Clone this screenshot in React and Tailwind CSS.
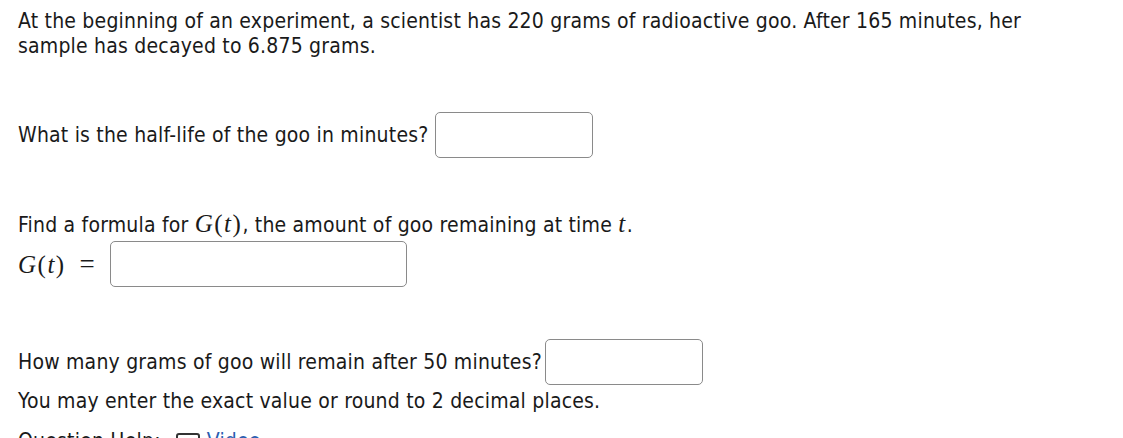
import React from 'react';

const AnswerBox = ({ className = '' }) => (
  <span className={`inline-block h-[46px] rounded-[5px] border border-[#8a8a8a] bg-white align-middle ${className}`} />
);

const M = ({ children }) => (
  <span className="font-['Liberation_Serif',serif] text-[25px] tracking-[1.5px]">{children}</span>
);

const App = () => {
  return (
    <div className="w-[1123px] h-[438px] overflow-hidden bg-white text-[#1a1a1a] font-['DejaVu_Sans_Condensed','DejaVu_Sans',sans-serif] text-[21px] tracking-[0.2px] leading-[25px] pl-[18px] pt-[9px]">
      <p>
        At the beginning of an experiment, a scientist has 220 grams of radioactive goo. After 165 minutes, her
        <br />
        sample has decayed to 6.875 grams.
      </p>

      <div className="mt-[53px] flex items-center gap-[7px]">
        <span>What is the half-life of the goo in minutes?</span>
        <AnswerBox className="w-[158px]" />
      </div>

      <p className="mt-[53px]">
        Find a formula for <M><i>G</i>(<i>t</i>)</M>, the amount of goo remaining at time <M><i>t</i></M>.
      </p>
      <div className="mt-[3px] flex items-center">
        <M><i>G</i>(<i>t</i>) <span className="ml-[6px] text-[27px]">=</span></M>
        <AnswerBox className="ml-[14px] w-[297px]" />
      </div>

      <div className="mt-[52px] flex items-center gap-[3px]">
        <span>How many grams of goo will remain after 50 minutes?</span>
        <AnswerBox className="w-[158px] h-[44px]" />
      </div>
      <p className="mt-[4px]">You may enter the exact value or round to 2 decimal places.</p>

      <div className="mt-[15px] flex items-center gap-[7px]">
        <span>Question Help:</span>
        <span className="ml-[8px] inline-block w-[24px] h-[18px] rounded-[3px] border-2 border-[#333]" />
        <span className="text-[#2a5db0]">Video</span>
      </div>
    </div>
  );
};

export default App;
